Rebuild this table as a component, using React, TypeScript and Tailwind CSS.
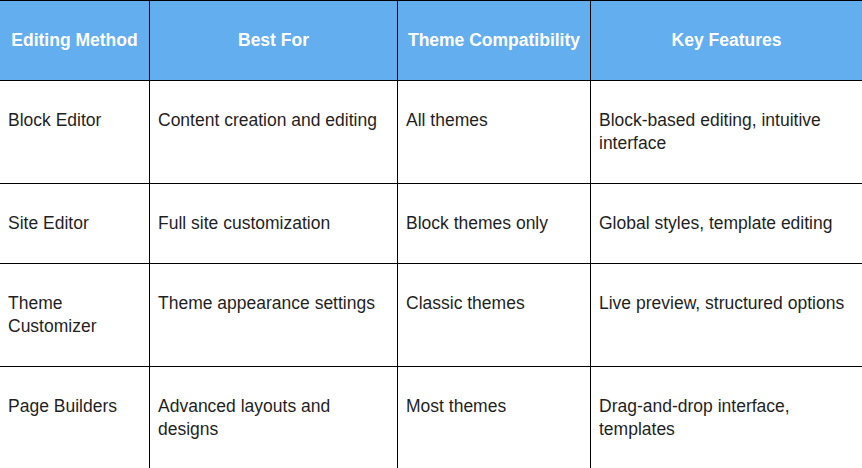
const headers = ['Editing Method', 'Best For', 'Theme Compatibility', 'Key Features'];

const rows: string[][] = [
    ['Block Editor', 'Content creation and editing', 'All themes', 'Block-based editing, intuitive interface'],
    ['Site Editor', 'Full site customization', 'Block themes only', 'Global styles, template editing'],
    ['Theme Customizer', 'Theme appearance settings', 'Classic themes', 'Live preview, structured options'],
    ['Page Builders', 'Advanced layouts and designs', 'Most themes', 'Drag-and-drop interface, templates'],
];

const cols = 'grid grid-cols-[150px_248px_193px_1fr]';

export default function App() {
    return (
        <div className="h-[468px] w-[862px] overflow-hidden bg-white font-['Liberation_Sans',Arial,sans-serif] text-[17.5px] leading-[23px]">
            {/* Header */}
            <div className={`${cols} border-y border-black bg-[#62aeef]`}>
                {headers.map((h, i) => (
                    <div
                        key={h}
                        className={`px-1 py-[28px] text-center font-bold whitespace-nowrap text-white ${i < 3 ? 'border-r border-black' : ''}`}
                    >
                        {h}
                    </div>
                ))}
            </div>

            {/* Body */}
            {rows.map((row) => (
                <div key={row[0]} className={`${cols} border-b border-black`}>
                    {row.map((cell, i) => (
                        <div
                            key={i}
                            className={`py-[28px] pr-2 pl-2 text-[#1f1f1f] ${i < 3 ? 'border-r border-black' : ''}`}
                        >
                            {cell}
                        </div>
                    ))}
                </div>
            ))}
        </div>
    );
}
